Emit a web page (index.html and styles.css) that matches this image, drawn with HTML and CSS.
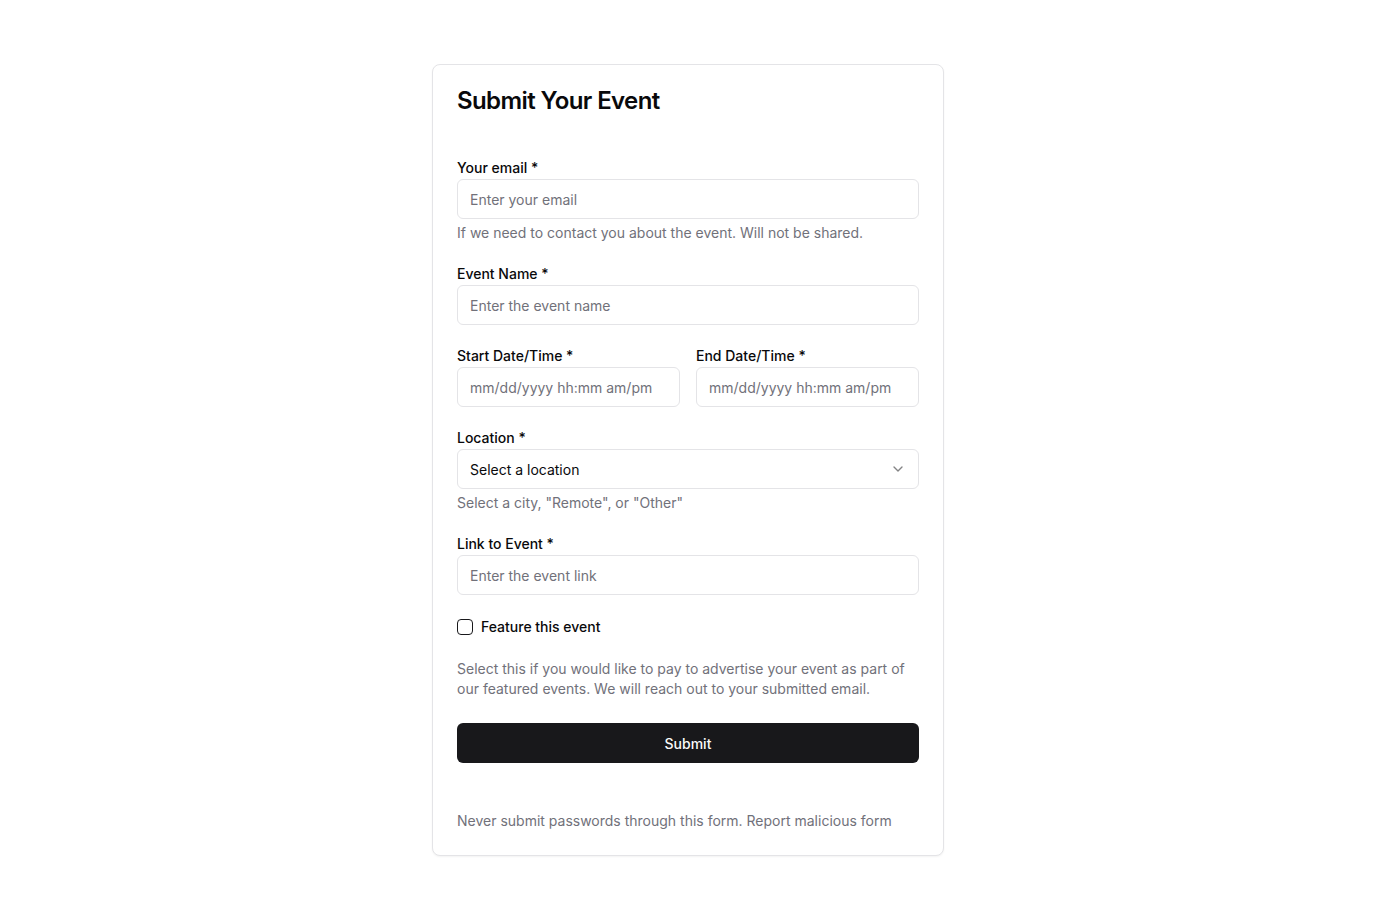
FILE: index.html
```html
<!DOCTYPE html>
<html lang="en">
<head>
    <meta charset="UTF-8">
    <meta name="viewport" content="width=device-width, initial-scale=1.0">
    <title>Submit Your Event</title>
    <link rel="stylesheet" href="styles.css">
</head>
<body>

<div class="card">
    <h1 class="card-title">Submit Your Event</h1>

    <form class="event-form" onsubmit="return false;">
        <div class="field">
            <label for="email">Your email *</label>
            <input type="email" id="email" placeholder="Enter your email">
            <p class="hint">If we need to contact you about the event. Will not be shared.</p>
        </div>

        <div class="field">
            <label for="eventName">Event Name *</label>
            <input type="text" id="eventName" placeholder="Enter the event name">
        </div>

        <div class="field-row">
            <div class="field">
                <label for="start">Start Date/Time *</label>
                <input type="text" id="start" placeholder="mm/dd/yyyy hh:mm am/pm">
            </div>
            <div class="field">
                <label for="end">End Date/Time *</label>
                <input type="text" id="end" placeholder="mm/dd/yyyy hh:mm am/pm">
            </div>
        </div>

        <div class="field">
            <label for="location">Location *</label>
            <div class="select">
                <span>Select a location</span>
                <svg width="16" height="16" viewBox="0 0 24 24" fill="none" stroke="currentColor" stroke-width="2" stroke-linecap="round" stroke-linejoin="round"><path d="m6 9 6 6 6-6"/></svg>
            </div>
            <p class="hint">Select a city, "Remote", or "Other"</p>
        </div>

        <div class="field">
            <label for="link">Link to Event *</label>
            <input type="text" id="link" placeholder="Enter the event link">
        </div>

        <div class="check-row">
            <input type="checkbox" id="featured">
            <label for="featured">Feature this event</label>
        </div>

        <p class="hint feature-note">Select this if you would like to pay to advertise your event as part of our featured events. We will reach out to your submitted email.</p>

        <button type="submit">Submit</button>
    </form>

    <p class="hint footer-note">Never submit passwords through this form. Report malicious form</p>
</div>

</body>
</html>
```

FILE: styles.css
```css
body {
    font-family: Inter, "Noto Sans", sans-serif;
    background-color: #ffffff;
    color: #09090b;
    margin: 0;
    padding: 64px 0;
}
.card {
    width: 512px;
    box-sizing: border-box;
    margin: 0 auto;
    padding: 24px 24px 24px;
    background-color: white;
    border: 1px solid #e4e4e7;
    border-radius: 8px;
    box-shadow: 0 1px 2px rgba(0, 0, 0, 0.05);
}
.card-title {
    font-size: 24px;
    font-weight: 600;
    line-height: 24px;
    letter-spacing: -0.025em;
    margin: 0 0 42px;
}
.event-form {
    display: flex;
    flex-direction: column;
}
.field {
    display: flex;
    flex-direction: column;
    margin-bottom: 18px;
}
.field label {
    font-size: 14px;
    font-weight: 500;
    line-height: 20px;
    padding-top: 3px;
    margin-bottom: 1px;
}
.field input,
.select {
    height: 40px;
    box-sizing: border-box;
    width: 100%;
    padding: 0 12px;
    border: 1px solid #e4e4e7;
    border-radius: 6px;
    font-family: inherit;
    font-size: 14px;
    color: #09090b;
    background: white;
    outline: none;
}
.field input::placeholder {
    color: #71717a;
}
.select {
    display: flex;
    align-items: center;
    justify-content: space-between;
}
.select svg {
    color: #09090b;
    opacity: 0.5;
}
.hint {
    font-size: 14px;
    line-height: 20px;
    color: #71717a;
    margin: 0;
}
.field .hint {
    margin-top: 4px;
    margin-bottom: 0;
}
.field-row {
    display: grid;
    grid-template-columns: 1fr 1fr;
    gap: 16px;
}
.check-row {
    display: flex;
    align-items: center;
    gap: 8px;
    height: 20px;
    margin-top: 4px;
}
.check-row input {
    appearance: none;
    width: 16px;
    height: 16px;
    margin: 0;
    border: 1px solid #18181b;
    border-radius: 4px;
    background: white;
}
.check-row label {
    font-size: 14px;
    font-weight: 500;
    line-height: 20px;
}
.feature-note {
    margin-top: 22px;
}
button {
    margin-top: 24px;
    height: 40px;
    width: 100%;
    border: none;
    border-radius: 6px;
    background-color: #18181b;
    color: #fafafa;
    font-family: inherit;
    font-size: 14px;
    font-weight: 500;
    cursor: pointer;
}
.footer-note {
    margin-top: 48px;
}
```
